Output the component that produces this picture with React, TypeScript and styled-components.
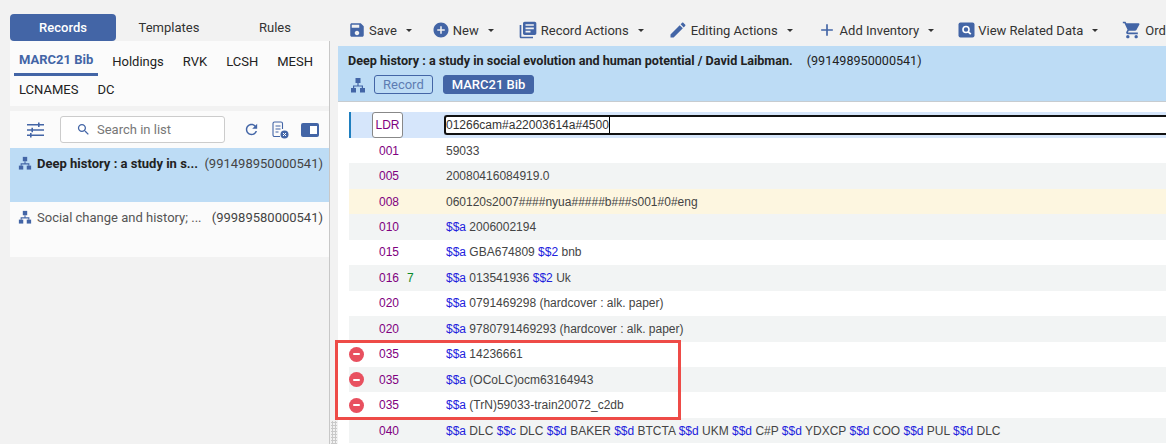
import * as React from "react";
import styled, { createGlobalStyle } from "styled-components";

const GlobalStyle = createGlobalStyle`
  html, body {
    margin: 0;
    padding: 0;
    background: #f2f2f2;
    overflow: hidden;
  }
  * {
    box-sizing: border-box;
  }
`;

const BLUE = "#4365a6";

const Page = styled.div`
  width: 1166px;
  height: 444px;
  display: flex;
  overflow: hidden;
  position: relative;
  padding-left: 10px;
  font-family: Roboto, "Liberation Sans", sans-serif;
  font-size: 13px;
  color: #333;
`;

const LeftColumn = styled.div`
  width: 320px;
  flex: 0 0 auto;
  padding-top: 14px;
  display: flex;
  flex-direction: column;
`;

const ModeTabs = styled.div`
  display: flex;
  height: 27px;
`;

const ModeTab = styled.div<{ $active?: boolean }>`
  width: 106px;
  display: flex;
  align-items: center;
  justify-content: center;
  border-radius: 4px 4px 0 0;
  background: ${(p) => (p.$active ? BLUE : "transparent")};
  color: ${(p) => (p.$active ? "#fff" : "#333")};
  font-weight: ${(p) => (p.$active ? 500 : 400)};
  border-radius: 4px;
`;

const LeftBody = styled.div`
  flex: 1;
  border-right: 1px solid #c8c8c8;
  display: flex;
  flex-direction: column;
`;

const FormatTabs = styled.div`
  height: 65px;
  background: #fbfbfb;
  padding: 7px 0 0 4px;
  display: flex;
  flex-wrap: wrap;
  align-content: flex-start;
  column-gap: 9px;
`;

const FormatTab = styled.div<{ $active?: boolean }>`
  height: 28px;
  padding: ${(p) => (p.$active ? "0 5px 2px" : "2px 5px 0")};
  display: flex;
  align-items: center;
  color: ${(p) => (p.$active ? BLUE : "#222")};
  font-weight: ${(p) => (p.$active ? 700 : 400)};
  border-bottom: 3px solid ${(p) => (p.$active ? BLUE : "transparent")};
`;

const ListTools = styled.div`
  height: 37px;
  margin-top: 5px;
  background: #fbfbfb;
  display: flex;
  align-items: center;
  color: ${BLUE};
`;

const SearchBox = styled.div`
  width: 165px;
  height: 27px;
  margin: 0 18px 0 16px;
  border: 1px solid #ccc;
  border-radius: 3px;
  background: #fff;
  display: flex;
  align-items: center;
  gap: 6px;
  padding-left: 15px;
  color: #777;
`;

const ToolIcon = styled.svg<{ $gap?: number }>`
  flex: 0 0 auto;
  margin-right: ${(p) => p.$gap ?? 0}px;
`;

const ListRow = styled.div<{ $selected?: boolean }>`
  height: ${(p) => (p.$selected ? 54 : 55)}px;
  background: ${(p) => (p.$selected ? "#bddcf5" : "#fbfbfb")};
  padding: 8px 6px 0 8px;
  display: flex;
  align-items: flex-start;
  line-height: 15px;
  color: #444;
`;

const ListTitle = styled.span<{ $bold?: boolean }>`
  flex: 1;
  margin-left: 5px;
  color: ${(p) => (p.$bold ? "#222" : "#555")};
  font-weight: ${(p) => (p.$bold ? 700 : 400)};
  white-space: nowrap;
`;

const Splitter = styled.div`
  width: 8px;
  flex: 0 0 auto;
  display: flex;
  align-items: flex-end;
  justify-content: center;
`;

const SplitterDots = styled.div`
  width: 6px;
  height: 23px;
  background-image: radial-gradient(#c9c9c9 1px, transparent 1.2px);
  background-size: 3px 3px;
`;

const RightColumn = styled.div`
  flex: 1;
  min-width: 0;
  display: flex;
  flex-direction: column;
`;

const ActionBar = styled.div`
  height: 46px;
  padding: 14px 0 0 10px;
  display: flex;
  align-items: center;
  gap: 24px;
`;

const Action = styled.div<{ $tight?: boolean }>`
  display: flex;
  align-items: center;
  gap: 3px;
  white-space: nowrap;
  margin-right: ${(p) => (p.$tight ? -4 : 0)}px;
`;

const Caret = styled.span`
  width: 0;
  height: 0;
  margin-left: 6px;
  border-left: 3px solid transparent;
  border-right: 3px solid transparent;
  border-top: 3px solid #333;
`;

const RecordHeader = styled.div`
  height: 56px;
  background: #bddcf5;
  border-bottom: 1px solid #c7ccd0;
  padding: 7px 0 0 10px;
`;

const HeaderTitle = styled.div`
  display: flex;
  gap: 14px;
  line-height: 15px;
  font-size: 12.6px;
  color: #222;
  b {
    font-weight: 700;
  }
`;

const HeaderMeta = styled.div`
  display: flex;
  align-items: center;
  margin-top: 7px;
  padding-left: 2px;
`;

const Chip = styled.span<{ $filled?: boolean }>`
  height: 19px;
  display: flex;
  align-items: center;
  border-radius: 3px;
  padding: 0 ${(p) => (p.$filled ? 8 : 8)}px;
  margin-left: ${(p) => (p.$filled ? 10 : 8)}px;
  border: 1px solid ${BLUE};
  background: ${(p) => (p.$filled ? BLUE : "transparent")};
  color: ${(p) => (p.$filled ? "#fff" : "#5d7cb3")};
  font-weight: ${(p) => (p.$filled ? 500 : 400)};
`;

const Editor = styled.div`
  flex: 1;
  background: #fff;
  padding: 10px 0 0 11px;
`;

const FieldRow = styled.div<{ $tone?: "plain" | "alt" | "warn" | "active" }>`
  height: ${(p) => (p.$tone === "active" ? 26 : 25.45)}px;
  display: grid;
  grid-template-columns: 30px 28px 39px 1fr;
  align-items: center;
  font-family: "Liberation Sans", Arial, sans-serif;
  font-size: 12px;
  color: #444;
  white-space: nowrap;
  background: ${(p) =>
    p.$tone === "alt"
      ? "#f2f4f4"
      : p.$tone === "warn"
      ? "#fdf6e0"
      : p.$tone === "active"
      ? "#d6e6fb"
      : "#fff"};
  box-shadow: ${(p) => (p.$tone === "active" ? "inset 2px 0 0 #1f7fbf" : "none")};
`;

const Tag = styled.span`
  color: #800080;
`;

const Indicator = styled.span`
  color: #0a8a2a;
`;

const Sub = styled.span`
  color: #2222dd;
`;

const LdrBox = styled.span`
  width: 31px;
  height: 26px;
  margin-left: -7px;
  border: 1px solid #888;
  border-radius: 3px;
  background: #fff;
  color: #800080;
  display: flex;
  align-items: center;
  justify-content: center;
`;

const FieldInput = styled.div`
  height: 20px;
  margin-left: -2px;
  border: 2px solid #111;
  border-right: 0;
  border-radius: 3px 0 0 3px;
  background: #fff;
  color: #333;
  display: flex;
  align-items: center;
  padding-left: 0;
  span {
    border-right: 1px solid #000;
    line-height: 16px;
    padding-right: 0;
  }
`;

const RemoveButton = styled.span`
  width: 15px;
  height: 15px;
  border-radius: 50%;
  background: #e8505f;
  display: flex;
  align-items: center;
  justify-content: center;
  &::before {
    content: "";
    width: 7px;
    height: 2px;
    border-radius: 1px;
    background: #fff;
  }
`;

const Highlight = styled.div`
  position: absolute;
  left: 335px;
  top: 340px;
  width: 346px;
  height: 80px;
  border: 3px solid #ee4b47;
  pointer-events: none;
`;

const Mi: React.FC<{ d: string; size?: number; color?: string }> = ({ d, size = 18, color = BLUE }) => (
  <svg width={size} height={size} viewBox="0 0 24 24" fill={color}>
    <path d={d} />
  </svg>
);

const HierarchyIcon: React.FC<{ size?: number }> = ({ size = 14 }) => (
  <svg width={size} height={size} viewBox="0 0 16 16" fill={BLUE} style={{ flex: "0 0 auto" }}>
    <rect x="5.5" y="1" width="5" height="5" />
    <rect x="1" y="11" width="5" height="4.5" />
    <rect x="10" y="11" width="5" height="4.5" />
    <path d="M7.4 6h1.2v2.4H13V11h-1.2V9.6H4.2V11H3V8.4h4.4z" />
  </svg>
);

const icons = {
  save: "M17 3H5c-1.11 0-2 .9-2 2v14c0 1.1.89 2 2 2h14c1.1 0 2-.9 2-2V7l-4-4zm-5 16c-1.66 0-3-1.34-3-3s1.34-3 3-3 3 1.34 3 3-1.34 3-3 3zm3-10H5V5h10v4z",
  add: "M12 2C6.48 2 2 6.48 2 12s4.48 10 10 10 10-4.48 10-10S17.52 2 12 2zm5 11h-4v4h-2v-4H7v-2h4V7h2v4h4v2z",
  books: "M4 6H2v14c0 1.1.9 2 2 2h14v-2H4V6zm16-4H8c-1.1 0-2 .9-2 2v12c0 1.1.9 2 2 2h12c1.1 0 2-.9 2-2V4c0-1.1-.9-2-2-2zm-1 9H9V9h10v2zm-4 4H9v-2h6v2zm4-8H9V5h10v2z",
  edit: "M3 17.25V21h3.75L17.81 9.94l-3.75-3.75L3 17.25zM20.71 7.04c.39-.39.39-1.02 0-1.41l-2.34-2.34c-.39-.39-1.02-.39-1.41 0l-1.83 1.83 3.75 3.75 1.83-1.83z",
  plus: "M19 13h-6v6h-2v-6H5v-2h6V5h2v6h6v2z",
  cart: "M7 18c-1.1 0-1.99.9-1.99 2S5.9 22 7 22s2-.9 2-2-.9-2-2-2zM1 2v2h2l3.6 7.59-1.35 2.45c-.16.28-.25.61-.25.96 0 1.1.9 2 2 2h12v-2H7.42c-.14 0-.25-.11-.25-.25l.03-.12.9-1.63h7.45c.75 0 1.41-.41 1.75-1.03l3.58-6.49c.08-.14.12-.31.12-.48 0-.55-.45-1-1-1H5.21l-.94-2H1zm16 16c-1.1 0-1.99.9-1.99 2s.89 2 1.99 2 2-.9 2-2-.9-2-2-2z",
  search: "M15.5 14h-.79l-.28-.27C15.41 12.59 16 11.11 16 9.5 16 5.91 13.09 3 9.5 3S3 5.91 3 9.5 5.91 16 9.5 16c1.61 0 3.09-.59 4.23-1.57l.27.28v.79l5 4.99L20.49 19l-4.99-5zm-6 0C7.01 14 5 11.99 5 9.5S7.01 5 9.5 5 14 7.01 14 9.5 11.99 14 9.5 14z",
  refresh: "M17.65 6.35C16.2 4.9 14.21 4 12 4c-4.42 0-7.99 3.58-7.99 8s3.57 8 7.99 8c3.73 0 6.84-2.55 7.73-6h-2.08c-.82 2.33-3.04 4-5.65 4-3.31 0-6-2.69-6-6s2.69-6 6-6c1.66 0 3.14.69 4.22 1.78L13 11h7V4l-2.35 2.35z",
};

const ViewRelatedIcon = () => (
  <svg width="17" height="17" viewBox="0 0 17 17">
    <rect x="0.5" y="0.5" width="16" height="15" rx="2" fill={BLUE} />
    <circle cx="8" cy="7.5" r="3" fill="none" stroke="#fff" strokeWidth="1.6" />
    <path d="M10.2 9.8l2.6 2.4" stroke="#fff" strokeWidth="1.8" />
  </svg>
);

const FilterIcon = () => (
  <ToolIcon width="17" height="16" viewBox="0 0 17 16" fill={BLUE}>
    <path d="M0 2h17v1.4H0zM0 7.3h17v1.4H0zM0 12.6h17V14H0z" />
    <path d="M11 .5h1.6v4.4H11zM4.4 5.8H6v4.4H4.4zM3 11.1h1.6v4.4H3z" />
  </ToolIcon>
);

const ClearListIcon = () => (
  <ToolIcon $gap={12} width="18" height="18" viewBox="0 0 18 18" fill="none" stroke={BLUE}>
    <path d="M11.5 8V2.5A1.5 1.5 0 0 0 10 1H3.5A1.5 1.5 0 0 0 2 2.5V14a1.5 1.5 0 0 0 1.5 1.5H9" strokeWidth="1.1" />
    <path d="M4.5 5h5M4.5 8h5M4.5 11h3" strokeWidth="1.1" />
    <circle cx="13.5" cy="13.5" r="4" fill={BLUE} stroke="none" />
    <path d="M12 12l3 3M15 12l-3 3" stroke="#fff" strokeWidth="1" />
  </ToolIcon>
);

const PanelToggleIcon = () => (
  <ToolIcon width="18" height="14" viewBox="0 0 18 14">
    <rect width="18" height="14" rx="2" fill={BLUE} />
    <rect x="9" y="3" width="7" height="8" fill="#fff" />
  </ToolIcon>
);

const actions = [
  { label: "Save", icon: <Mi d={icons.save} />, tight: true },
  { label: "New", icon: <Mi d={icons.add} /> },
  { label: "Record Actions", icon: <Mi d={icons.books} size={20} /> },
  { label: "Editing Actions", icon: <Mi d={icons.edit} size={20} /> },
  { label: "Add Inventory", icon: <Mi d={icons.plus} size={20} /> },
  { label: "View Related Data", icon: <ViewRelatedIcon /> },
];

type Field = {
  tag: string;
  ind?: string;
  value: React.ReactNode;
  tone?: "plain" | "alt" | "warn";
  remove?: boolean;
};

const fields: Field[] = [
  { tag: "001", value: "59033" },
  { tag: "005", value: "20080416084919.0", tone: "alt" },
  { tag: "008", value: "060120s2007####nyua#####b###s001#0#eng", tone: "warn" },
  { tag: "010", value: <><Sub>$$a</Sub> 2006002194</>, tone: "alt" },
  { tag: "015", value: <><Sub>$$a</Sub> GBA674809 <Sub>$$2</Sub> bnb</> },
  { tag: "016", ind: "7", value: <><Sub>$$a</Sub> 013541936 <Sub>$$2</Sub> Uk</>, tone: "alt" },
  { tag: "020", value: <><Sub>$$a</Sub> 0791469298 (hardcover : alk. paper)</> },
  { tag: "020", value: <><Sub>$$a</Sub> 9780791469293 (hardcover : alk. paper)</>, tone: "alt" },
  { tag: "035", value: <><Sub>$$a</Sub> 14236661</>, remove: true },
  { tag: "035", value: <><Sub>$$a</Sub> (OCoLC)ocm63164943</>, tone: "alt", remove: true },
  { tag: "035", value: <><Sub>$$a</Sub> (TrN)59033-train20072_c2db</>, remove: true },
  {
    tag: "040",
    tone: "alt",
    value: (
      <>
        <Sub>$$a</Sub> DLC <Sub>$$c</Sub> DLC <Sub>$$d</Sub> BAKER <Sub>$$d</Sub> BTCTA <Sub>$$d</Sub> UKM{" "}
        <Sub>$$d</Sub> C#P <Sub>$$d</Sub> YDXCP <Sub>$$d</Sub> COO <Sub>$$d</Sub> PUL <Sub>$$d</Sub> DLC
      </>
    ),
  },
];

const App: React.FC = () => {
  return (
    <Page>
      <GlobalStyle />
      <LeftColumn>
        <ModeTabs>
          <ModeTab $active>Records</ModeTab>
          <ModeTab>Templates</ModeTab>
          <ModeTab>Rules</ModeTab>
        </ModeTabs>
        <LeftBody>
          <FormatTabs>
            <FormatTab $active>MARC21 Bib</FormatTab>
            <FormatTab>Holdings</FormatTab>
            <FormatTab>RVK</FormatTab>
            <FormatTab>LCSH</FormatTab>
            <FormatTab>MESH</FormatTab>
            <FormatTab>LCNAMES</FormatTab>
            <FormatTab>DC</FormatTab>
          </FormatTabs>
          <ListTools>
            <span style={{ width: 17 }} />
            <FilterIcon />
            <SearchBox>
              <Mi d={icons.search} size={15} />
              Search in list
            </SearchBox>
            <ToolIcon $gap={11} width="17" height="17" viewBox="0 0 24 24" fill={BLUE}>
              <path d={icons.refresh} />
            </ToolIcon>
            <ClearListIcon />
            <PanelToggleIcon />
          </ListTools>
          <ListRow $selected>
            <HierarchyIcon />
            <ListTitle $bold>Deep history : a study in s...</ListTitle>
            <span>(991498950000541)</span>
          </ListRow>
          <ListRow>
            <HierarchyIcon />
            <ListTitle>Social change and history; ...</ListTitle>
            <span>(99989580000541)</span>
          </ListRow>
        </LeftBody>
      </LeftColumn>
      <Splitter>
        <SplitterDots />
      </Splitter>
      <RightColumn>
        <ActionBar>
          {actions.map((a) => (
            <Action key={a.label} $tight={a.tight}>
              {a.icon}
              {a.label}
              <Caret />
            </Action>
          ))}
          <Action>
            <Mi d={icons.cart} size={20} />
            Order
          </Action>
        </ActionBar>
        <RecordHeader>
          <HeaderTitle>
            <b>Deep history : a study in social evolution and human potential / David Laibman.</b>
            <span>(991498950000541)</span>
          </HeaderTitle>
          <HeaderMeta>
            <HierarchyIcon size={16} />
            <Chip>Record</Chip>
            <Chip $filled>MARC21 Bib</Chip>
          </HeaderMeta>
        </RecordHeader>
        <Editor>
          <FieldRow $tone="active">
            <span />
            <LdrBox>LDR</LdrBox>
            <span />
            <FieldInput>
              <span>01266cam#a22003614a#4500</span>
            </FieldInput>
          </FieldRow>
          {fields.map((f, i) => (
            <FieldRow key={i} $tone={f.tone ?? "plain"}>
              {f.remove ? <RemoveButton /> : <span />}
              <Tag>{f.tag}</Tag>
              <Indicator>{f.ind}</Indicator>
              <span>{f.value}</span>
            </FieldRow>
          ))}
        </Editor>
      </RightColumn>
      <Highlight />
    </Page>
  );
};

export default App;
